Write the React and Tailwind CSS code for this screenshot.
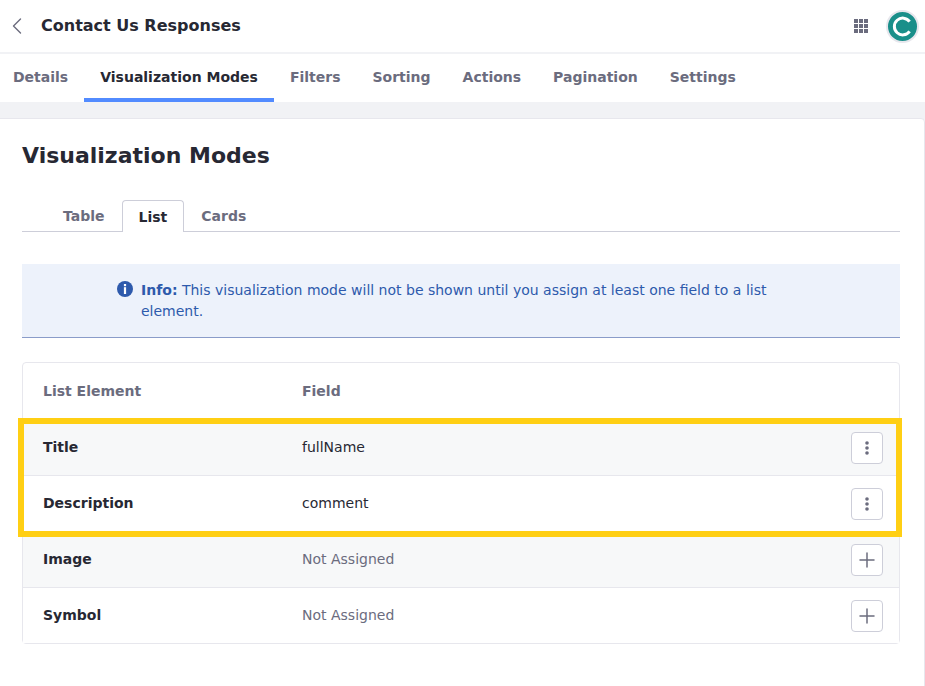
import { ChevronLeft, Plus } from 'lucide-react';

const navTabs = ['Details', 'Visualization Modes', 'Filters', 'Sorting', 'Actions', 'Pagination', 'Settings'];

const rows = [
  { name: 'Title', field: 'fullName', assigned: true },
  { name: 'Description', field: 'comment', assigned: true },
  { name: 'Image', field: 'Not Assigned' },
  { name: 'Symbol', field: 'Not Assigned' },
];

function AppsIcon() {
  return (
    <svg width="14" height="14" viewBox="0 0 14 14" fill="#6b6c7e">
      {[0, 5, 10].map((y) =>
        [0, 5, 10].map((x) => <rect key={`${x}-${y}`} x={x} y={y} width="4" height="4" />)
      )}
    </svg>
  );
}

function Avatar() {
  return (
    <div className="w-[33px] h-[33px] rounded-full bg-[#1a8f8a] border-2 border-[#e7e7ed] flex items-center justify-center">
      <svg width="23" height="23" viewBox="0 0 23 23" fill="none">
        <path d="M18.6 16.4 A8.4 8.4 0 1 1 18.6 6.6" stroke="#fff" strokeWidth="3" />
      </svg>
    </div>
  );
}

function InfoIcon() {
  return (
    <svg width="16" height="16" viewBox="0 0 16 16" className="shrink-0 mt-[1px]">
      <circle cx="8" cy="8" r="8" fill="#2e5aac" />
      <rect x="6.9" y="3" width="2.2" height="2.2" fill="#fff" />
      <rect x="6.9" y="6.2" width="2.2" height="6.8" fill="#fff" />
    </svg>
  );
}

function KebabIcon() {
  return (
    <svg width="4" height="14" viewBox="0 0 4 14" fill="#6b6c7e">
      <circle cx="2" cy="2" r="1.8" />
      <circle cx="2" cy="7" r="1.8" />
      <circle cx="2" cy="12" r="1.8" />
    </svg>
  );
}

export default function App() {
  return (
    <div className="h-[686px] overflow-hidden bg-[#f1f2f5] font-['DejaVu_Sans',sans-serif] text-[#272833]">
      <header className="h-[54px] bg-white border-b-2 border-[#f1f2f5] flex items-center pl-[3px] pr-[6px]">
        <ChevronLeft className="w-[28px] h-[28px] text-[#6b6c7e]" strokeWidth={1.2} />
        <h1 className="ml-[10px] text-base font-bold leading-none">Contact Us Responses</h1>
        <div className="ml-auto flex items-center gap-[18px]">
          <AppsIcon />
          <Avatar />
        </div>
      </header>

      <nav className="h-[48px] bg-white flex">
        {navTabs.map((tab) => (
          <div
            key={tab}
            className={`px-4 first:pl-[13px] flex items-center pt-[2px] text-sm font-bold border-b-[4px] ${
              tab === 'Visualization Modes'
                ? 'border-[#528bff] text-[#272833]'
                : 'border-transparent text-[#6b6c7e]'
            }`}
          >
            {tab}
          </div>
        ))}
      </nav>

      <main className="mt-[16px] -ml-px h-[600px] bg-white border border-[#e7e7ed] rounded-tr pl-[22px] pr-[24px] pt-[22px]">
        <h2 className="text-[22px] leading-[30px] font-bold">Visualization Modes</h2>

        <div className="mt-[29px] h-[32px] flex pl-[25px] border-b border-[#cdced9]">
          {['Table', 'List', 'Cards'].map((t) =>
            t === 'List' ? (
              <div
                key={t}
                className="ml-px h-[32px] px-4 flex items-center text-sm font-bold bg-white border border-b-0 border-[#cdced9] rounded-t"
              >
                {t}
              </div>
            ) : (
              <div key={t} className="h-[31px] px-4 first:pl-4 last:pl-[17px] flex items-center text-sm font-bold text-[#6b6c7e]">
                {t}
              </div>
            )
          )}
        </div>

        <div className="mt-[32px] h-[74px] bg-[#edf2fb] border-b border-[#8a9cc9] pl-[95px] pt-[16px] flex gap-2 text-sm leading-[21px] text-[#2e5aac]">
          <InfoIcon />
          <p className="w-[660px]">
            <b>Info:</b> This visualization mode will not be shown until you assign at least one field to a list element.
          </p>
        </div>

        <div className="relative mt-[24px] border border-[#e7e7ed] rounded text-sm">
          <div className="h-[56px] flex items-center px-5 font-bold text-[#6b6c7e]">
            <div className="w-[259px]">List Element</div>
            <div>Field</div>
          </div>
          {rows.map((row, i) => (
            <div
              key={row.name}
              className={`h-[56px] flex items-center pl-5 pr-4 border-t border-[#e7e7ed] ${
                i % 2 === 0 ? 'bg-[#f7f8f9]' : 'bg-white'
              }`}
            >
              <div className="w-[259px] mb-[2px] font-bold">{row.name}</div>
              <div className={`mb-[2px] ${row.assigned ? '' : 'text-[#6b6c7e]'}`}>{row.field}</div>
              <button className="ml-auto w-8 h-8 flex items-center justify-center bg-white border border-[#cdced9] rounded">
                {row.assigned ? (
                  <KebabIcon />
                ) : (
                  <Plus className="w-6 h-6 text-[#6b6c7e]" strokeWidth={1.5} />
                )}
              </button>
            </div>
          ))}
          <div className="absolute left-[-5px] right-[-3px] top-[55px] h-[119px] border-[6px] border-[#ffcf14]" />
        </div>
      </main>
    </div>
  );
}
